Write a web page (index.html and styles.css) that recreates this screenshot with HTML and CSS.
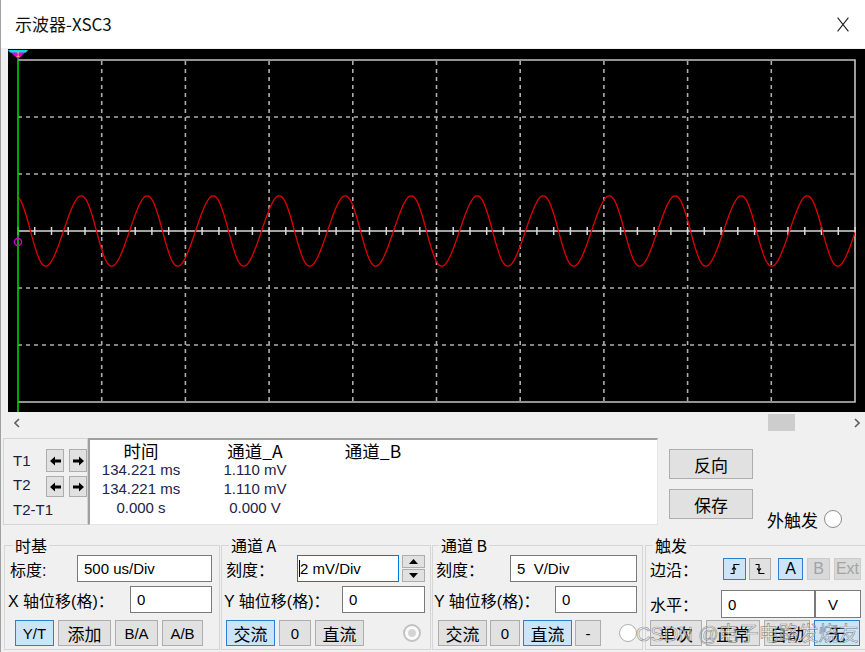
FILE: index.html
```html
<!DOCTYPE html>
<html lang="zh-CN">
<head>
<meta charset="utf-8">
<title>示波器-XSC3</title>
<link rel="stylesheet" href="styles.css">
</head>
<body>
<div class="window">
  <div class="titlebar">
    <span class="title">示波器-XSC3</span>
    <svg class="close" width="12" height="15" viewBox="0 0 12 15"><path d="M0.6 0.6 L11.4 14.4 M11.4 0.6 L0.6 14.4" stroke="#222" stroke-width="1.1" fill="none"/></svg>
  </div>

  <div class="scope">
    <svg width="857" height="363" viewBox="0 0 857 363">
      <g stroke="#adadad" stroke-width="1.6" stroke-dasharray="4 4" fill="none">
        <path d="M93.7 12V353 M177.4 12V353 M261.1 12V353 M344.8 12V353 M428.5 12V353 M512.2 12V353 M595.9 12V353 M679.6 12V353 M763.3 12V353"/>
        <path d="M10 68H847 M10 125H847 M10 239H847 M10 296H847"/>
      </g>
      <path d="M10 11H847V353H10" stroke="#c4c4c4" stroke-width="1.6" fill="none"/>
      <path d="M10 182H847" stroke="#d8d8d8" stroke-width="1.6"/>
      <path id="ticks" d="" stroke="#d8d8d8" stroke-width="1.5" fill="none"/>
      <polyline id="wave" points="" fill="none" stroke="#e00000" stroke-width="1.3"/>
      <line x1="10" y1="9" x2="10" y2="363" stroke="#00d000" stroke-width="1.6"/>
      <circle cx="10" cy="193" r="3.5" fill="none" stroke="#d000d0" stroke-width="1.4"/>
      <polygon points="0,1 20,1 10,10" fill="#e000e0"/>
      <polygon points="0,1 20,1 18,3.5 2,3.5" fill="#00e0e0"/>
      <text x="10" y="8" font-size="7" font-family="Liberation Sans, sans-serif" fill="#ffe000" text-anchor="middle">1</text>
    </svg>
  </div>

  <div class="hscroll">
    <div class="sarrow"><svg width="6" height="10" viewBox="0 0 6 10"><path d="M5 1 L1 5 L5 9" stroke="#606060" stroke-width="1.6" fill="none"/></svg></div>
    <div class="track"><div class="thumb"></div></div>
    <div class="sarrow"><svg width="6" height="10" viewBox="0 0 6 10"><path d="M1 1 L5 5 L1 9" stroke="#606060" stroke-width="1.6" fill="none"/></svg></div>
  </div>

  <div class="readrow">
    <div class="tpanel">
      <span class="tl">T1</span>
      <div class="abtn"><svg width="11" height="10" viewBox="0 0 11 10"><polygon points="0,5 5,0.5 5,3.5 11,3.5 11,6.5 5,6.5 5,9.5" fill="#000"/></svg></div>
      <div class="abtn"><svg width="11" height="10" viewBox="0 0 11 10"><polygon points="11,5 6,0.5 6,3.5 0,3.5 0,6.5 6,6.5 6,9.5" fill="#000"/></svg></div>
      <span class="tl t2">T2</span>
      <div class="abtn"><svg width="11" height="10" viewBox="0 0 11 10"><polygon points="0,5 5,0.5 5,3.5 11,3.5 11,6.5 5,6.5 5,9.5" fill="#000"/></svg></div>
      <div class="abtn"><svg width="11" height="10" viewBox="0 0 11 10"><polygon points="11,5 6,0.5 6,3.5 0,3.5 0,6.5 6,6.5 6,9.5" fill="#000"/></svg></div>
      <span class="tl t21">T2-T1</span>
    </div>

    <div class="readout">
      <span class="h">时间</span><span class="h">通道_A</span><span class="h">通道_B</span>
      <span>134.221 ms</span><span>1.110 mV</span><span></span>
      <span>134.221 ms</span><span>1.110 mV</span><span></span>
      <span>0.000 s</span><span>0.000 V</span><span></span>
    </div>

    <div class="side">
      <div class="sidecol">
        <div class="sbtn">反向</div>
        <div class="sbtn">保存</div>
      </div>
      <div class="ext"><span>外触发</span><span class="radio"></span></div>
    </div>
  </div>

  <div class="groups">
    <fieldset class="grp g1">
      <legend>时基</legend>
      <div class="row"><span class="lbl">标度:</span><div class="field w135">500 us/Div</div></div>
      <div class="row"><span class="lbl lx">X 轴位移(格)：</span><div class="field w82">0</div></div>
      <div class="btnrow">
        <div class="btn on w39">Y/T</div>
        <div class="btn cjk w53">添加</div>
        <div class="btn w43">B/A</div>
        <div class="btn w41">A/B</div>
      </div>
    </fieldset>

    <fieldset class="grp g2">
      <legend>通道 A</legend>
      <div class="row"><span class="lbl">刻度：</span>
        <div class="field focus w102"><span class="caret"></span>2 mV/Div</div>
        <div class="spin">
          <div class="sp"><svg width="9" height="5" viewBox="0 0 9 5"><polygon points="0,5 4.5,0 9,5" fill="#000"/></svg></div>
          <div class="sp"><svg width="9" height="5" viewBox="0 0 9 5"><polygon points="0,0 4.5,5 9,0" fill="#000"/></svg></div>
        </div>
      </div>
      <div class="row"><span class="lbl lx">Y 轴位移(格)：</span><div class="field w83">0</div></div>
      <div class="btnrow">
        <div class="btn cjk on w49">交流</div>
        <div class="btn w32">0</div>
        <div class="btn cjk w49">直流</div>
        <span class="radio dis"></span>
      </div>
    </fieldset>

    <fieldset class="grp g3">
      <legend>通道 B</legend>
      <div class="row"><span class="lbl">刻度：</span><div class="field w127">5&nbsp;&nbsp;V/Div</div></div>
      <div class="row"><span class="lbl lx">Y 轴位移(格)：</span><div class="field w82">0</div></div>
      <div class="btnrow g3b">
        <div class="btn cjk w49">交流</div>
        <div class="btn w30">0</div>
        <div class="btn cjk on w49">直流</div>
        <div class="btn w26">-</div>
        <span class="radio plain"></span>
      </div>
    </fieldset>

    <fieldset class="grp g4">
      <legend>触发</legend>
      <div class="row"><span class="lbl">边沿：</span>
        <div class="edges">
          <div class="ebtn on w23"><svg width="12" height="12" viewBox="0 0 12 12"><path d="M1.5 10.5H5V1.5H10.5" fill="none" stroke="#000" stroke-width="1.2"/><path d="M3 6.5L5 4.5L7 6.5" fill="none" stroke="#000" stroke-width="1.1"/></svg></div>
          <div class="ebtn w22 gap3"><svg width="12" height="12" viewBox="0 0 12 12"><path d="M1.5 1.5H5V10.5H10.5" fill="none" stroke="#000" stroke-width="1.2"/><path d="M3 5.5L5 7.5L7 5.5" fill="none" stroke="#000" stroke-width="1.1"/></svg></div>
          <div class="ebtn on w25 gap7">A</div>
          <div class="ebtn off w23 gap4">B</div>
          <div class="ebtn off w27 gap4">Ext</div>
        </div>
      </div>
      <div class="row r2"><span class="lbl">水平：</span>
        <div class="lvl"><div class="field w94">0</div><div class="field w46">V</div></div>
      </div>
      <div class="btnrow g4b">
        <div class="btn cjk w52">单次</div>
        <div class="btn cjk w54">正常</div>
        <div class="btn cjk w46">自动</div>
        <div class="btn cjk on w46">无</div>
      </div>
    </fieldset>
  </div>

  <div class="watermark">CSDN @电子电路发烧友</div>
</div>
<script src="script.js"></script>
</body>
</html>
```

FILE: styles.css
```css
* { box-sizing: border-box; }
html, body { margin: 0; padding: 0; }
body {
  width: 865px;
  height: 652px;
  overflow: hidden;
  background: #f0f0f0;
  font-family: "Liberation Sans", "Noto Sans CJK SC", sans-serif;
  color: #000;
}
.window {
  position: relative;
  width: 865px;
  height: 652px;
  box-shadow: inset 1px 0 0 #a0a0a0;
}
.titlebar {
  height: 48px;
  background: #fff;
  display: flex;
  align-items: center;
  justify-content: space-between;
  padding: 0 16px 0 15px;
  box-shadow: inset 1px 0 0 #a0a0a0;
}
.title {
  font-family: "Noto Sans CJK SC", sans-serif;
  font-size: 17px;
  line-height: 20px;
  color: #111;
}
.close { display: block; }

.scope {
  margin: 1px 0 0 8px;
  height: 363px;
  background: #000;
}
.scope svg { display: block; }

.hscroll {
  height: 21px;
  margin-left: 8px;
  display: flex;
  align-items: center;
}
.sarrow {
  width: 17px;
  height: 21px;
  display: flex;
  align-items: center;
  justify-content: center;
}
.sarrow svg { display: block; }
.track {
  flex: 1;
  height: 21px;
  display: flex;
  align-items: center;
}
.thumb {
  width: 27px;
  height: 17px;
  background: #cdcdcd;
  margin-left: 743px;
}

.readrow {
  display: flex;
  height: 87px;
  margin-top: 5px;
}
.tpanel {
  margin-left: 3px;
  width: 85px;
  height: 87px;
  border: 1px solid #d4d4d4;
  display: grid;
  grid-template-columns: 28px 18px 18px;
  grid-template-rows: 23px 21px 17px;
  column-gap: 5px;
  row-gap: 4px;
  padding: 10px 0 0 9px;
  align-items: center;
  align-content: start;
  font-size: 15px;
  line-height: 17px;
  color: #1c1c40;
}
.tl { white-space: nowrap; }
.t2 { align-self: start; }
.t21 { grid-column: 1 / 4; }
.abtn {
  height: 100%;
  border: 1px solid #adadad;
  background: #e1e1e1;
  display: flex;
  align-items: center;
  justify-content: center;
}
.abtn svg { display: block; }

.readout {
  width: 570px;
  height: 87px;
  background: #fff;
  border-top: 2px solid #a0a0a0;
  border-left: 2px solid #a0a0a0;
  border-right: 1px solid #e4e4e4;
  border-bottom: 1px solid #e4e4e4;
  display: grid;
  grid-template-columns: 102px 126px 110px;
  grid-auto-rows: 19px;
  align-content: start;
  padding-top: 1px;
  text-align: center;
  font-size: 15px;
  line-height: 19px;
  color: #22224a;
}
.readout .h {
  font-family: "Noto Sans CJK SC", sans-serif;
  font-size: 17.5px;
  color: #000;
  white-space: nowrap;
}

.side {
  display: flex;
  margin-left: 11px;
  padding-top: 11px;
}
.sidecol {
  display: flex;
  flex-direction: column;
  gap: 10px;
}
.sbtn {
  width: 84px;
  height: 30px;
  border: 1px solid #adadad;
  background: #e1e1e1;
  display: flex;
  align-items: center;
  justify-content: center;
  font-family: "Noto Sans CJK SC", sans-serif;
  font-size: 17px;
}
.ext {
  display: flex;
  align-items: center;
  gap: 6px;
  margin-left: 14px;
  margin-top: 59px;
  height: 22px;
  font-family: "Noto Sans CJK SC", sans-serif;
  font-size: 17px;
  white-space: nowrap;
}
.radio {
  display: block;
  width: 18px;
  height: 18px;
  border-radius: 50%;
  border: 1px solid #8c8c8c;
  background: #fff;
  flex: none;
}
.radio.dis {
  margin-left: auto;
  margin-right: 4px;
  border: 2px solid #c2c2c2;
  background: radial-gradient(circle, #d4d4d4 0 3.5px, #fafafa 4.5px);
}
.radio.plain {
  margin-left: auto;
  border-color: #b0b0b0;
}

.groups {
  display: flex;
  margin-top: 11px;
}
fieldset.grp {
  height: 114px;
  min-width: 0;
  border: 1px solid #d6d6d6;
  flex: none;
}
fieldset.grp legend {
  font-family: "Noto Sans CJK SC", sans-serif;
  font-size: 16px;
  line-height: 18px;
  padding: 0 2px;
  margin-left: 3px;
}
fieldset.g1 { margin: 0 0 0 4px; width: 216px; padding: 1px 7px 0 5px; }
fieldset.g2 { margin: 0 0 0 1px; width: 210px; padding: 1px 5px 0 4px; }
fieldset.g3 { margin: 0 0 0 1px; width: 211px; padding: 1px 5px 0 3px; }
fieldset.g4 { margin: 0 0 0 2px; width: 222px; padding: 1px 5px 0 4px; }

.row {
  display: flex;
  align-items: center;
  height: 27px;
}
.row + .row { margin-top: 4px; }
.g4 .r2 { margin-top: 8px; height: 28px; }
.lbl {
  font-size: 16px;
  white-space: nowrap;
}
.lx { margin-left: -2px; }
.field {
  margin-left: auto;
  height: 27px;
  border: 1px solid #7a7a7a;
  background: #fff;
  display: flex;
  align-items: center;
  padding-left: 6px;
  font-size: 15px;
  white-space: nowrap;
}
.field.focus { border-color: #0078d7; padding-left: 1px; }
.caret {
  display: inline-block;
  width: 1px;
  height: 17px;
  background: #000;
}
.spin {
  margin-left: 3px;
  width: 23px;
  height: 27px;
  display: flex;
  flex-direction: column;
  gap: 1px;
}
.sp {
  flex: 1;
  border: 1px solid #adadad;
  background: #e1e1e1;
  display: flex;
  align-items: center;
  justify-content: center;
}
.sp svg { display: block; }

.edges {
  margin-left: auto;
  display: flex;
  align-items: center;
}
.ebtn {
  height: 22px;
  border: 1px solid #adadad;
  background: #e1e1e1;
  display: flex;
  align-items: center;
  justify-content: center;
  font-size: 16px;
}
.ebtn.on { background: #cce4f7; border-color: #2f7fd0; }
.ebtn.off { background: #d9d9d9; border-color: #cccccc; color: #a3a3a3; }
.ebtn svg { display: block; }
.gap3 { margin-left: 3px; }
.gap4 { margin-left: 4px; }
.gap7 { margin-left: 7px; }
.lvl { margin-left: auto; display: flex; }
.lvl .field { height: 28px; margin-left: 0; }
.lvl .w46 { padding-left: 12px; }

.btnrow {
  display: flex;
  align-items: center;
  gap: 4px;
  margin-top: 7px;
  height: 26px;
}
.g1 .btnrow { margin-left: 5px; }
.g3b { gap: 3px; margin-left: 2px; }
.g4 .g4b { margin-top: 2px; }
.btn {
  height: 26px;
  border: 1px solid #adadad;
  background: #e1e1e1;
  display: flex;
  align-items: center;
  justify-content: center;
  font-size: 15px;
  white-space: nowrap;
}
.btn.cjk {
  font-family: "Noto Sans CJK SC", sans-serif;
  font-size: 17px;
}
.btn.on { background: #cce4f7; border-color: #2f7fd0; }

.w22 { width: 22px; } .w23 { width: 23px; } .w25 { width: 25px; } .w26 { width: 26px; }
.w27 { width: 27px; } .w30 { width: 30px; } .w32 { width: 32px; } .w39 { width: 39px; }
.w41 { width: 41px; } .w43 { width: 43px; } .w46 { width: 46px; } .w49 { width: 49px; }
.w52 { width: 52px; } .w53 { width: 53px; } .w54 { width: 54px; } .w82 { width: 82px; }
.w83 { width: 83px; } .w94 { width: 94px; } .w102 { width: 102px; } .w127 { width: 127px; }
.w135 { width: 135px; }

.watermark {
  position: absolute;
  left: 636px;
  top: 622px;
  font-family: "Liberation Sans", "Noto Sans CJK SC", sans-serif;
  font-size: 20px;
  line-height: 24px;
  white-space: nowrap;
  color: rgba(255, 255, 255, 0.55);
  -webkit-text-stroke: 0.7px rgba(70, 70, 70, 0.55);
  pointer-events: none;
}
```

FILE: script.js
```javascript
(function () {
  var ticks = '';
  for (var k = 0; k <= 50; k++) {
    var x = 10 + k * 16.74;
    ticks += 'M' + x.toFixed(1) + ' 178V186';
  }
  document.getElementById('ticks').setAttribute('d', ticks);

  var pts = [];
  for (var xr = 10; xr <= 847; xr += 1) {
    var X = xr + 8;
    var th = 2 * Math.PI * (X - 80) / 66;
    var y = 182 - 35 * (Math.cos(th) + 0.06 * Math.sin(2 * th));
    pts.push(xr + ',' + y.toFixed(1));
  }
  document.getElementById('wave').setAttribute('points', pts.join(' '));
})();
```
